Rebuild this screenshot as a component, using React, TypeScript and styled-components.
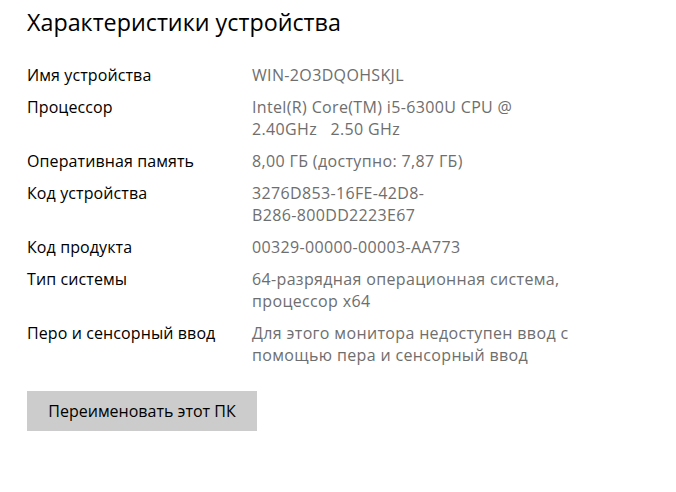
import React from 'react';
import styled, { createGlobalStyle } from 'styled-components';

const GlobalStyle = createGlobalStyle`
  html, body {
    margin: 0;
    padding: 0;
    background: #ffffff;
  }
  body {
    font-family: "Open Sans", "Noto Sans", sans-serif;
    color: #000000;
  }
`;

const specs: { label: string; value: string[] }[] = [
  { label: 'Имя устройства', value: ['WIN-2O3DQOHSKJL'] },
  { label: 'Процессор', value: ['Intel(R) Core(TM) i5-6300U CPU @', '2.40GHz   2.50 GHz'] },
  { label: 'Оперативная память', value: ['8,00 ГБ (доступно: 7,87 ГБ)'] },
  { label: 'Код устройства', value: ['3276D853-16FE-42D8-', 'B286-800DD2223E67'] },
  { label: 'Код продукта', value: ['00329-00000-00003-AA773'] },
  { label: 'Тип системы', value: ['64-разрядная операционная система,', 'процессор x64'] },
  { label: 'Перо и сенсорный ввод', value: ['Для этого монитора недоступен ввод с', 'помощью пера и сенсорный ввод'] },
];

export default function App() {
  return (
    <>
      <GlobalStyle />
      <Page>
        <Title>Характеристики устройства</Title>
        <SpecList>
          {specs.map((s) => (
            <SpecRow key={s.label}>
              <Label>{s.label}</Label>
              <Value>
                {s.value.map((line) => (
                  <Line key={line}>{line}</Line>
                ))}
              </Value>
            </SpecRow>
          ))}
        </SpecList>
        <RenameButton>Переименовать этот ПК</RenameButton>
      </Page>
    </>
  );
}

const Page = styled.div`
  padding: 5px 0 0 27px;
  display: flex;
  flex-direction: column;
  align-items: flex-start;
`;

const Title = styled.h1`
  margin: 0;
  font-size: 23.3px;
  font-weight: 400;
  line-height: 34px;
  color: #000000;
`;

const SpecList = styled.div`
  margin-top: 25px;
  display: flex;
  flex-direction: column;
  gap: 10px;
`;

const SpecRow = styled.div`
  display: grid;
  grid-template-columns: 225px auto;
`;

const Label = styled.div`
  font-size: 16px;
  line-height: 22px;
  color: #000000;
  letter-spacing: 0.1px;
`;

const Value = styled.div`
  font-size: 16px;
  line-height: 22px;
  color: #6e6e6e;
  letter-spacing: 0.35px;
`;

const Line = styled.div`
  white-space: pre;
`;

const RenameButton = styled.button`
  margin-top: 25px;
  width: 230px;
  height: 40px;
  border: none;
  background: #cccccc;
  font-family: inherit;
  font-size: 16px;
  color: #000000;
  padding: 0;
`;
